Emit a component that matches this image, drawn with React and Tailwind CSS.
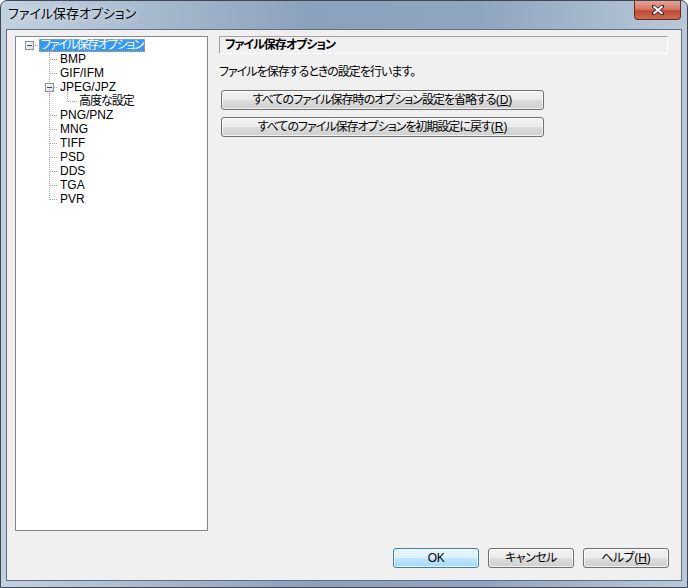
import React from "react";

const jp = "font-['Liberation_Sans','Noto_Sans_CJK_JP',sans-serif] [font-feature-settings:'palt']";

function MinusBox({ x, y }) {
  return (
    <g>
      <rect x={x + 0.5} y={y + 0.5} width="8" height="8" fill="url(#boxg)" stroke="#8f8f8f" />
      <line x1={x + 2} y1={y + 4.5} x2={x + 7} y2={y + 4.5} stroke="#2c4f93" />
    </g>
  );
}

function TreeLines() {
  const childRows = [22, 36, 78, 92, 106, 120, 134, 148, 162];
  return (
    <svg className="absolute inset-0 pointer-events-none" width="191" height="493" shapeRendering="crispEdges">
      <defs>
        <linearGradient id="boxg" x1="0" y1="0" x2="1" y2="1">
          <stop offset="0" stopColor="#ffffff" />
          <stop offset="1" stopColor="#d8d8d8" />
        </linearGradient>
      </defs>
      <g stroke="#a0a0a0" strokeDasharray="1 1">
        <line x1="19" y1="8.5" x2="23" y2="8.5" />
        <line x1="33.5" y1="14" x2="33.5" y2="163" />
        {childRows.map((y) => (
          <line key={y} x1="34" y1={y + 0.5} x2="42" y2={y + 0.5} />
        ))}
        <line x1="38" y1="50.5" x2="42" y2="50.5" />
        <line x1="51.5" y1="55" x2="51.5" y2="65" />
        <line x1="52" y1="64.5" x2="61" y2="64.5" />
      </g>
      <MinusBox x={9} y={4} />
      <MinusBox x={29} y={46} />
    </svg>
  );
}

function Btn({ children, w, def }) {
  return (
    <button
      className={
        "h-[20px] rounded-[3px] border text-[12px] leading-[16px] text-black shadow-[inset_0_0_0_1px_rgba(255,255,255,0.7)] " +
        (def
          ? "border-[#3c7fb1] bg-[linear-gradient(180deg,#eaf6fd_0%,#d9f0fc_50%,#bee6fd_50%,#a7d9f5_100%)] "
          : "border-[#707070] bg-[linear-gradient(180deg,#f2f2f2_0%,#ebebeb_50%,#dddddd_50%,#cfcfcf_100%)] ") +
        w
      }
    >
      {children}
    </button>
  );
}

function Key({ k }) {
  return (
    <span className="tracking-normal">
      (<span className="underline">{k}</span>)
    </span>
  );
}

export default function App() {
  const items = [
    { label: "BMP", pl: "pl-[44px]" },
    { label: "GIF/IFM", pl: "pl-[44px]" },
    { label: "JPEG/JPZ", pl: "pl-[44px]" },
    { label: "高度な設定", pl: "pl-[63px] tracking-[-1px]" },
    { label: "PNG/PNZ", pl: "pl-[44px]" },
    { label: "MNG", pl: "pl-[44px]" },
    { label: "TIFF", pl: "pl-[44px]" },
    { label: "PSD", pl: "pl-[44px]" },
    { label: "DDS", pl: "pl-[44px]" },
    { label: "TGA", pl: "pl-[44px]" },
    { label: "PVR", pl: "pl-[44px]" },
  ];

  return (
    <div className={"w-[688px] h-[588px] flex flex-col rounded-t-[7px] border border-[#3e4753] bg-[linear-gradient(90deg,#c3d1df_0%,#a9bccf_20%,#8aa2bb_45%,#8ea6be_70%,#b9c9d9_100%)] " + jp}>
      <div className="h-[28px] flex items-start justify-between">
        <div className="pl-[7px] pt-[4px] text-[13px] leading-[18px] text-black [text-shadow:0_0_6px_rgba(255,255,255,0.9)]">
          ファイル保存オプション
        </div>
        <div className="mr-[6px] w-[47px] h-[19px] rounded-b-[4px] border border-t-0 border-[#6b2a22] bg-[linear-gradient(180deg,#e8a493_0%,#d47867_45%,#c24a35_55%,#cf6a4e_100%)] flex items-center justify-center">
          <svg width="12" height="10" viewBox="0 0 12 10">
            <path d="M1 1 L11 9 M11 1 L1 9" stroke="#3a2a2a" strokeWidth="3.6" strokeLinecap="square" />
            <path d="M1.5 1.2 L10.5 8.8 M10.5 1.2 L1.5 8.8" stroke="#ffffff" strokeWidth="2" />
          </svg>
        </div>
      </div>
      <div className="flex-1 mx-[5px] mb-[6px] border border-[#5f6e80] bg-[#f0f0f0] flex flex-col">
        <div className="flex pl-[8px] pt-[6px] gap-[11px]">
          <div className="relative w-[193px] h-[495px] border border-[#828790] bg-white text-[12px] text-black">
            <TreeLines />
            <div className="flex flex-col pt-[1px]">
              <div className="h-[14px] leading-[14px] pl-[23px] flex items-center">
                <span className="h-[13px] leading-[11px] px-[1px] bg-[#3399ff] text-white border border-dotted border-[#e0a040] tracking-[-1.5px]">
                  ファイル保存オプション
                </span>
              </div>
              {items.map((it) => (
                <div key={it.label} className={"h-[14px] leading-[14px] " + it.pl}>
                  {it.label}
                </div>
              ))}
            </div>
          </div>
          <div className="w-[449px] flex flex-col text-[12px] text-black tracking-[-1px]">
            <div className="h-[18px] border border-t-[#a0a0a0] border-l-[#a0a0a0] border-r-white border-b-white pl-[5px] font-bold leading-[16px]">
              ファイル保存オプション
            </div>
            <div className="mt-[10px] leading-[16px]">ファイルを保存するときの設定を行います。</div>
            <div className="mt-[10px] pl-[2px] flex flex-col gap-[7px]">
              <Btn w="w-[323px]">
                すべてのファイル保存時のオプション設定を省略する<Key k="D" />
              </Btn>
              <Btn w="w-[323px]">
                すべてのファイル保存オプションを初期設定に戻す<Key k="R" />
              </Btn>
            </div>
          </div>
        </div>
        <div className="mt-[17px] flex justify-end pr-[12px] gap-[9px] tracking-[-0.5px]">
          <Btn w="w-[86px]" def>OK</Btn>
          <Btn w="w-[86px]">キャンセル</Btn>
          <Btn w="w-[86px]">
            ヘルプ<Key k="H" />
          </Btn>
        </div>
      </div>
    </div>
  );
}
